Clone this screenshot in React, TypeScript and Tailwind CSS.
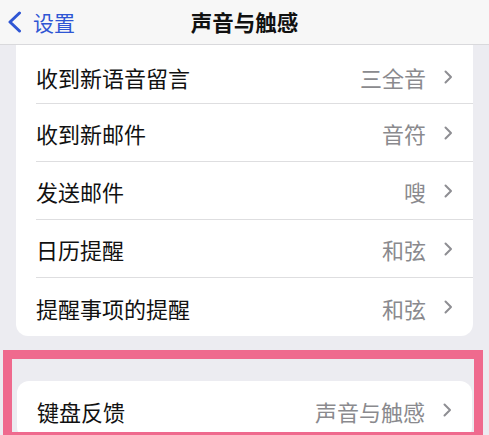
import React from "react";

type Row = { label: string; value: string };

const rows: Row[] = [
  { label: "收到新语音留言", value: "三全音" },
  { label: "收到新邮件", value: "音符" },
  { label: "发送邮件", value: "嗖" },
  { label: "日历提醒", value: "和弦" },
  { label: "提醒事项的提醒", value: "和弦" },
];

const Chevron = () => (
  <svg width="9" height="14" viewBox="0 0 9 14" fill="none" className="ml-[18px] shrink-0">
    <path d="M1.5 1.5 L7 7 L1.5 12.5" stroke="#8e8e93" strokeWidth="2" strokeLinecap="round" strokeLinejoin="round" />
  </svg>
);

const SettingRow = ({ row, first, last }: { row: Row; first?: boolean; last?: boolean }) => (
  <div className={`flex items-stretch ${first ? "h-[59px] pt-[5px]" : "h-[58px]"}`}>
    <div
      className={`flex flex-1 items-center ml-[20px] pr-[20px] ${last ? "" : "border-b border-[#dedee0]"}`}
    >
      <span className="flex-1 text-[22px] text-[#111111] pt-[2px]">{row.label}</span>
      <span className="text-[22px] text-[#8a8a8e] pt-[2px]">{row.value}</span>
      <Chevron />
    </div>
  </div>
);

export default function App() {
  return (
    <div
      className="w-[489px] h-[435px] overflow-hidden bg-[#ececf1]"
      style={{ fontFamily: '"Noto Sans CJK SC", "Noto Sans", sans-serif' }}
    >
      <div className="relative h-[45px] bg-[#f7f7f7] border-b border-[#d9d9dc] flex items-center">
        <div className="flex items-center pl-[7px] text-[#2f56d4]">
          <svg width="16" height="22" viewBox="0 0 16 22" fill="none">
            <path d="M12.5 2 L3 11 L12.5 20" stroke="#2f56d4" strokeWidth="3" strokeLinecap="round" strokeLinejoin="round" />
          </svg>
          <span className="ml-[10px] text-[21px] leading-none">设置</span>
        </div>
        <div className="absolute inset-0 flex items-center justify-center pointer-events-none">
          <span className="text-[21.5px] font-bold text-[#111111] leading-none">声音与触感</span>
        </div>
      </div>

      <div className="mx-[16px] bg-white rounded-b-[12px]">
        {rows.map((r, i) => (
          <SettingRow key={r.label} row={r} first={i === 0} last={i === rows.length - 1} />
        ))}
      </div>

      <div className="mt-[14px] ml-[3px] w-[480px] h-[91px] border-[9px] border-[#ef6a8e] overflow-hidden">
        <div className="pt-[22px] pl-[5px] pr-[2px]">
          <div className="bg-white rounded-[12px]">
            <SettingRow row={{ label: "键盘反馈", value: "声音与触感" }} last />
          </div>
        </div>
      </div>
    </div>
  );
}
